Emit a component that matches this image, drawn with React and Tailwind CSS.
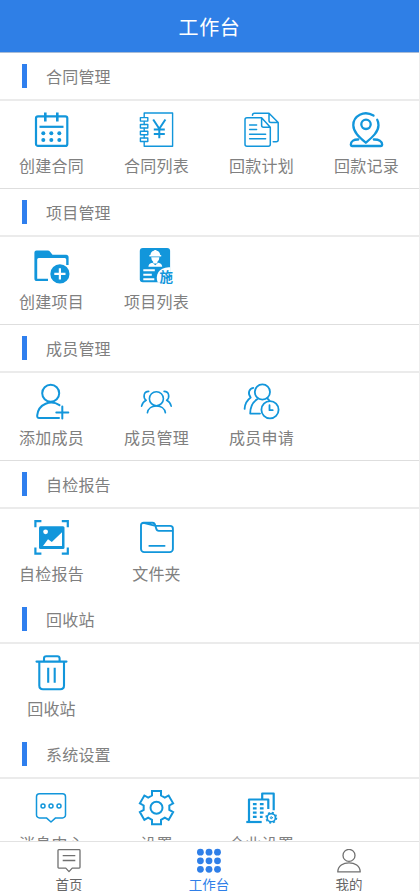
const gearPath = (cx, cy, outer, root, half) => {
  const points = [];
  for (let i = 0; i < 6; i++) {
    const a = (i * Math.PI) / 3;
    const sin = Math.sin(a);
    const cos = Math.cos(a);
    [
      [-half, -root],
      [-half, -outer],
      [half, -outer],
      [half, -root],
    ].forEach(([x, y]) => {
      points.push(
        `${(cx + x * cos - y * sin).toFixed(2)} ${(cy + x * sin + y * cos).toFixed(2)}`
      );
    });
  }
  return `M${points.join("L")}Z`;
};

const Icon = ({ children, width = 1.8 }) => (
  <svg
    viewBox="0 0 35 35"
    className="w-[35px] h-[35px] shrink-0 overflow-visible"
    fill="none"
    stroke="#1296db"
    strokeWidth={width}
    strokeLinecap="round"
    strokeLinejoin="round"
  >
    {children}
  </svg>
);

const CalendarIcon = () => (
  <Icon width={2.2}>
    <rect x="2" y="4.3" width="31.3" height="29.6" rx="2" />
    <path d="M11.3.5v9M23.3.5v9" strokeWidth="2.6" strokeLinecap="butt" />
    <path d="M5.5 14.8h24" strokeLinecap="butt" />
    <g fill="#1296db" stroke="none">
      {[9.3, 17.3, 25.3].map((x) => (
        <g key={x}>
          <circle cx={x} cy="21.2" r="2" />
          <circle cx={x} cy="28" r="2" />
        </g>
      ))}
    </g>
  </Icon>
);

const LedgerIcon = () => (
  <Icon width={1.4}>
    <path d="M5.2 5V1h28.4v33.3H5.2v-4.5M5.2 9.5v3M5.2 16.2v3M5.2 22.8v3" />
    {[5.6, 12.5, 19.2, 26].map((y) => (
      <rect key={y} x="1.4" y={y} width="7.4" height="3.5" />
    ))}
    <path d="M14.2 7.5l6.1 9.2 6.1-9.2M20.3 16.7v9.6M14.8 17.4h11M14.8 21.9h11" strokeWidth="2" strokeLinecap="butt" />
  </Icon>
);

const DocumentsIcon = () => (
  <Icon width={1.5}>
    <path d="M17.6 5.8H3a2 2 0 0 0-2 2v24.5a2 2 0 0 0 2 2h21.3a2 2 0 0 0 2-2V15.3zM17.6 5.8v7.5a2 2 0 0 0 2 2h6.7" />
    <path d="M8.5 3.2q0-2 2-2H25l9.2 9.3v17.2a2 2 0 0 1-2 2h-3M25 1.2v7.3a2 2 0 0 0 2 2h7.2" />
    <path d="M5.6 13h7M5.6 17.6h7M5.6 22.3h16M5.6 26.7h16" />
  </Icon>
);

const PinIcon = () => (
  <Icon width={2.3}>
    <path d="M24.5 3.6C15-2.2 4.3 4 4.3 13.2c0 6.8 6 12 12.5 17.5 6.5-5.5 12.7-10.7 12.7-17.5 0-2-.4-3.8-1.3-5.4" />
    <circle cx="17" cy="12.3" r="4.7" />
    <path d="M9.3 27.5C5.2 27.3 1.8 29 1.8 32.8q0 1.200 1.200 1.200h29q1.200 0 1.200-1.200c0-3.800-3.400-5.500-8.400-5.300" />
  </Icon>
);

const FolderAddIcon = () => (
  <Icon>
    <path
      d="M2.5 2.5h11.2a3 3 0 0 1 2.4 1.2L18.5 6.7H32a2.6 2.6 0 0 1 2.6 2.6V17h-2.4v-5.5q0-1.500-1.500-1.500H4.700q-1.500 0-1.500 1.500v19.300H14V33H3a2.600 2.600 0 0 1-2.600-2.600V4.600a2.100 2.100 0 0 1 2.100-2.100z"
      fill="#1296db"
      stroke="none"
    />
    <circle cx="25.9" cy="25.9" r="10.7" fill="#fff" stroke="none" />
    <circle cx="25.9" cy="25.9" r="9.6" fill="#1296db" stroke="none" />
    <path d="M25.9 20.3v11.2M20.3 25.9h11.2" stroke="#fff" strokeWidth="2.2" strokeLinecap="butt" />
  </Icon>
);

const WorkerIcon = () => (
  <Icon>
    <rect x=".8" y="0" width="30.3" height="34.3" rx="3" fill="#1296db" stroke="none" />
    <g fill="#fff" stroke="none">
      <path d="M11.4 7.1q.3-3.500 3.300-4.300l1-.8h1.200l1 .8q3 .8 3.300 4.300h1v1.300H10.400V7.100zM12.200 9.200h8.200q-.1 3-2 4.600v1.700h-4.200v-1.700q-1.900-1.600-2-4.600z" />
      <path d="M9.4 18.800q.2-3.500 4-4.100l2.900 2.500 2.900-2.500q3.800.6 4 4.100z" />
      <path d="M4.3 21.3h11.500v2H4.300zM4.300 25.700h8.500v2H4.300zM4.300 30.200h11v2h-11z" />
      <path d="M31.200 19.300v15.200H18.800C15.500 27.500 20 18.500 31.200 19.300z" />
    </g>
    <text
      x="27.300"
      y="33.600"
      textAnchor="middle"
      fontSize="13.500"
      fontWeight="700"
      fill="#1296db"
      stroke="none"
    >
      施
    </text>
  </Icon>
);

const AddUserIcon = () => (
  <Icon width={2}>
    <circle cx="16.7" cy="9.2" r="8.5" />
    <path d="M25.500 21.200C17 15.600 4.500 19.500 3.200 31.400q-.2 2.600 2 2.600H25" />
    <path d="M28.300 22.400v12M22.300 28.400h12" />
  </Icon>
);

const GroupIcon = () => (
  <Icon width={1.6}>
    <circle cx="17.4" cy="14.7" r="7" />
    <path d="M8.4 28.800c1.300-9.300 16.700-9.300 18 0" />
    <path d="M9.7 7.400C4.500 7.500 3.700 13.500 7.200 16.300 4.500 17.500 3.200 19.500 2.600 22.200" />
    <path d="M25.1 7.400c5.200.1 6 6.100 2.500 8.900 2.700 1.200 4 3.200 4.600 5.900" />
  </Icon>
);

const UserClockIcon = () => (
  <Icon width={1.8}>
    <circle cx="18.4" cy="8" r="7.6" />
    <path d="M16 29.600H6.200c0-6.600 2.300-11.400 7.300-14.500M23.300 14.500q1.200.8 2 2" />
    <circle cx="26" cy="25.700" r="8.600" />
    <path d="M25.500 21.200v5h3.200" />
    <path d="M9.300 3.900C4.800 4.700 3.500 9.700 6.700 13.500 3 16.200.8 20 .6 24.900" />
  </Icon>
);

const ScanImageIcon = () => (
  <Icon width={2.2}>
    <path
      d="M1.400 7.200V1.200h6M27.800 1.200h6v6M33.800 27.600v6h-6M7.400 33.600h-6v-6"
      strokeLinecap="butt"
      strokeLinejoin="miter"
    />
    <rect x="5" y="6.2" width="25.5" height="22.700" rx="1.500" fill="#1296db" stroke="none" />
    <circle cx="11.6" cy="11.8" r="2.4" fill="#fff" stroke="none" />
    <path d="M9 26l5-6.700 3.800 2.600L28 12.200V26z" fill="#fff" stroke="none" />
  </Icon>
);

const FolderIcon = () => (
  <Icon width={1.9}>
    <path d="M4.5 2.800h9c1.700 0 2.300.8 2.800 2.700l.8 2.800c.5 1.900 1 2.600 2.700 2.600H34M16.500 5.900h14.600a2.800 2.800 0 0 1 2.800 2.800v20.200a3.200 3.200 0 0 1-3.200 3.200H5.200A3.200 3.200 0 0 1 2 28.900V5.300a2.500 2.500 0 0 1 2.500-2.500z" />
    <path d="M10.200 25.900h15.500" strokeWidth="1.600" />
  </Icon>
);

const TrashIcon = () => (
  <Icon width={2.1}>
    <path d="M2.500 6.600h30M10 6V3.500q0-2.300 2.300-2.300h11q2.300 0 2.300 2.300V6" />
    <path d="M5.300 7.500v23q0 3.700 3.700 3.700h17.300q3.700 0 3.700-3.700v-23" />
    <path d="M14.200 12.700v15M20.700 12.700v15" strokeLinecap="butt" />
  </Icon>
);

const MessageIcon = () => (
  <Icon width={1.5}>
    <path d="M5.500 3.700h23a3 3 0 0 1 3 3v18.200a3 3 0 0 1-3 3h-6.900L17 32l-4.600-4.100H5.500a3 3 0 0 1-3-3V6.700a3 3 0 0 1 3-3z" />
    <circle cx="9" cy="16" r="2" />
    <circle cx="17" cy="16" r="2" />
    <circle cx="25" cy="16" r="2" />
  </Icon>
);

const GearIcon = () => (
  <Icon width={2}>
    <path d={gearPath(17.5, 17.7, 16.6, 12.2, 4.5)} strokeLinejoin="miter" />
    <circle cx="17.5" cy="17.7" r="6" />
  </Icon>
);

const CompanyIcon = () => (
  <Icon width={2.2}>
    <path d="M18.2 9V3.500h11.500v16.700M5 32V9.500h19.300v9.500" strokeLinecap="butt" />
    <path d="M2.300 32h15.400" strokeLinecap="butt" />
    <path
      d="M8.900 14.200h3.700M15.900 14.200h3.700M8.900 18.400h3.700M15.900 18.400h3.700M8.900 22.600h3.700M15.900 22.600h3.700M8.900 26.800h3.700M15.900 26.800h2.700"
      strokeLinecap="butt"
    />
    <circle cx="27.3" cy="27.700" r="4.100" strokeWidth="1.600" />
    <circle cx="27.3" cy="27.700" r="1" strokeWidth="1" />
    <circle cx="27.3" cy="27.700" r="5.200" strokeWidth="1.500" strokeDasharray="2 2.080" strokeLinecap="butt" />
  </Icon>
);

const sections = [
  {
    title: "合同管理",
    line: true,
    items: [
      { label: "创建合同", icon: CalendarIcon },
      { label: "合同列表", icon: LedgerIcon },
      { label: "回款计划", icon: DocumentsIcon },
      { label: "回款记录", icon: PinIcon },
    ],
  },
  {
    title: "项目管理",
    line: true,
    items: [
      { label: "创建项目", icon: FolderAddIcon },
      { label: "项目列表", icon: WorkerIcon },
    ],
  },
  {
    title: "成员管理",
    line: true,
    items: [
      { label: "添加成员", icon: AddUserIcon },
      { label: "成员管理", icon: GroupIcon },
      { label: "成员申请", icon: UserClockIcon },
    ],
  },
  {
    title: "自检报告",
    items: [
      { label: "自检报告", icon: ScanImageIcon },
      { label: "文件夹", icon: FolderIcon },
    ],
  },
  {
    title: "回收站",
    items: [{ label: "回收站", icon: TrashIcon }],
  },
  {
    title: "系统设置",
    items: [
      { label: "消息中心", icon: MessageIcon },
      { label: "设置", icon: GearIcon },
      { label: "企业设置", icon: CompanyIcon },
    ],
  },
];

const HomeTabIcon = () => (
  <svg viewBox="0 0 24 24" className="w-6 h-6" fill="none" stroke="#707070" strokeWidth="1.3" strokeLinejoin="round">
    <path d="M1.800.7h20.400q.8 0 .8.800v16.800q0 .8-.8.800h-7L12 22.600l-3.200-3.500h-7q-.8 0-.8-.8V1.500q0-.8.8-.8z" />
    <path d="M5.700 6.700h12.600M5.700 11.500h12.600" />
  </svg>
);

const WorkTabIcon = () => (
  <svg viewBox="0 0 24 24" className="w-6 h-6 overflow-visible" fill="#2f7fe8">
    {[3.2, 11.8, 20.3].map((y) =>
      [3.4, 12, 20.5].map((x) => <circle key={`${x}-${y}`} cx={x} cy={y} r="3.4" />)
    )}
  </svg>
);

const MineTabIcon = () => (
  <svg viewBox="0 0 24 24" className="w-6 h-6" fill="none" stroke="#707070" strokeWidth="1.3" strokeLinejoin="round">
    <circle cx="12" cy="6.400" r="6" />
    <path d="M.8 22.900C.8 10.800 23.200 10.800 23.200 22.900z" />
  </svg>
);

const tabs = [
  { label: "首页", icon: HomeTabIcon },
  { label: "工作台", icon: WorkTabIcon, active: true },
  { label: "我的", icon: MineTabIcon },
];

export default function App() {
  return (
    <div className="w-[420px] h-[891px] flex flex-col overflow-hidden bg-white border-r border-[#ececec] font-['Noto_Sans_CJK_SC',sans-serif] text-[#808080]">
      <header className="h-[53px] shrink-0 bg-[#2f7fe6] border-b border-[#a9bcd6] flex items-center justify-center pt-0.5">
        <h1 className="text-white text-[20px] leading-none tracking-[0.6px]">工作台</h1>
      </header>

      <main className="flex-1 min-h-0 overflow-hidden">
        {sections.map((section) => (
          <section key={section.title}>
            <div className="h-12 flex items-start pt-[11px] pl-[22px] border-b-2 border-[#ebebeb]">
              <span className="w-[5px] h-6 bg-[#2f7fee]" />
              <h2 className="ml-[19px] text-[16px] leading-6 tracking-[0.2px]">{section.title}</h2>
            </div>
            <div
              className={
                section.line
                  ? "h-[88px] w-[420px] -ml-px grid grid-cols-4 pt-[11px] border-b border-[#dedede]"
                  : "h-[87px] w-[420px] -ml-px grid grid-cols-4 pt-[11px]"
              }
            >
              {section.items.map(({ label, icon: ItemIcon }) => (
                <div key={label} className="flex flex-col items-center">
                  <ItemIcon />
                  <span className="mt-1.5 text-[16px] leading-6 tracking-[0.2px] whitespace-nowrap">
                    {label}
                  </span>
                </div>
              ))}
            </div>
          </section>
        ))}
      </main>

      <nav className="h-[50px] w-[420px] shrink-0 -ml-px grid grid-cols-3 border-t border-[#e2e2e2] bg-white">
        {tabs.map(({ label, icon: TabIcon, active }) => (
          <div key={label} className="flex flex-col items-center pt-[7px]">
            <TabIcon />
            <span
              className={
                active
                  ? "mt-px text-[13.5px] leading-5 text-[#2f7fe8]"
                  : "mt-px text-[13.5px] leading-5 text-[#666]"
              }
            >
              {label}
            </span>
          </div>
        ))}
      </nav>
    </div>
  );
}
